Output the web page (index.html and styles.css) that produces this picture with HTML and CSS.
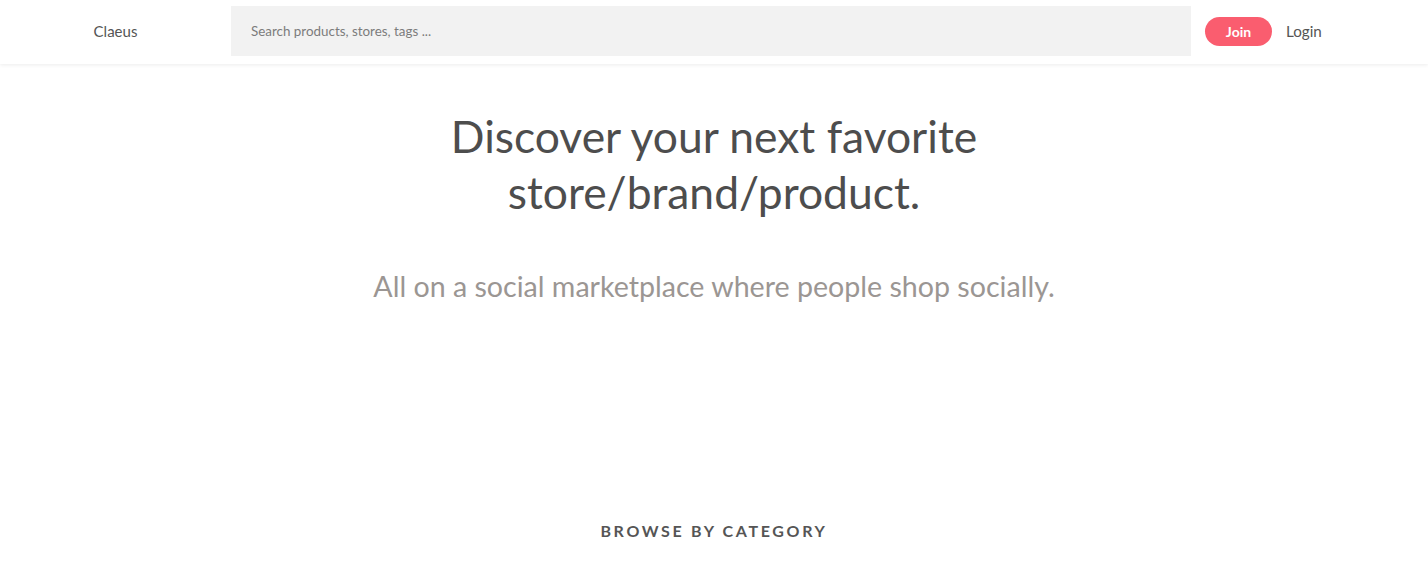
FILE: index.html
```html
<!DOCTYPE html>
<html lang="en">
<head>
<meta charset="utf-8">
<title>Claeus</title>
<link rel="stylesheet" href="styles.css">
</head>
<body>
<header class="topbar">
  <div class="brand">Claeus</div>
  <div class="search">
    <input class="search-input" type="text" placeholder="Search products, stores, tags ...">
  </div>
  <nav class="auth">
    <a class="btn-join" href="#">Join</a>
    <a class="link-login" href="#">Login</a>
  </nav>
</header>
<main>
  <section class="hero">
    <h1 class="hero-title">Discover your next favorite<br>store/brand/product.</h1>
    <p class="hero-sub">All on a social marketplace where people shop socially.</p>
  </section>
  <section class="categories">
    <h2 class="section-title">BROWSE BY CATEGORY</h2>
    <div class="category-list"></div>
  </section>
</main>
</body>
</html>
```
FILE: styles.css
```css
html::-webkit-scrollbar { width: 3px; }
html::-webkit-scrollbar-track { background: #f0f0f0; }
html::-webkit-scrollbar-thumb { background: #c1c1c1; border-top: 10px solid #f0f0f0; }

* { box-sizing: border-box; }

body {
  margin: 0;
  font-family: Lato, "Open Sans", sans-serif;
  color: #4a4a4a;
  background: #fff;
}

.topbar {
  display: flex;
  align-items: center;
  height: 64px;
  background: #fff;
  box-shadow: 0 1px 4px rgba(0, 0, 0, 0.08);
  position: relative;
  z-index: 2;
}

.brand {
  width: 231px;
  text-align: center;
  font-size: 15px;
  line-height: 18px;
  margin-top: -2px;
  color: #555;
}

.search {
  width: 960px;
  height: 50px;
  margin-top: -2px;
  background: #f2f2f2;
  display: flex;
  align-items: center;
  padding-left: 20px;
}

.search-input {
  border: 0;
  outline: 0;
  padding: 0;
  background: transparent;
  width: 100%;
  font-family: inherit;
  font-size: 13.4px;
  color: #555;
}
.search-input::placeholder { color: #7c7c7c; }

.auth {
  display: flex;
  align-items: center;
  gap: 14px;
  padding-left: 14px;
  margin-top: -2px;
}

.btn-join {
  display: inline-flex;
  align-items: center;
  justify-content: center;
  width: 67px;
  height: 29px;
  border-radius: 15px;
  background: #fa5d6f;
  color: #fff;
  font-weight: 700;
  font-size: 14px;
  text-decoration: none;
}

.link-login {
  color: #555;
  font-size: 15.2px;
  text-decoration: none;
}

.hero {
  text-align: center;
  padding-top: 44px;
}

.hero-title {
  margin: 0;
  font-weight: 400;
  font-size: 44.4px;
  line-height: 56px;
  color: #4d4d4d;
}

.hero-sub {
  margin: 48px 0 0;
  font-size: 28.6px;
  line-height: 36px;
  color: #9b9693;
}

.categories {
  padding-top: 217px;
  min-height: 900px;
}

.section-title {
  margin: 0;
  text-align: center;
  font-size: 16px;
  font-weight: 700;
  letter-spacing: 2.65px;
  color: #555;
}
```
